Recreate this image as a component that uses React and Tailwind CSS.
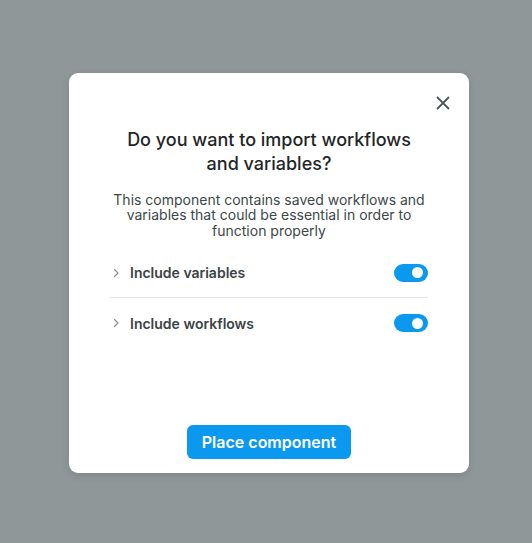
import React, { useState } from 'react';

function Toggle({ on, onChange }) {
  return (
    <button
      type="button"
      onClick={() => onChange(!on)}
      className={`relative w-[34px] h-[18px] rounded-full flex items-center px-[3px] ${on ? 'bg-[#0b99f0] justify-end' : 'bg-[#c9cfd1] justify-start'}`}
    >
      <span className="block w-[11px] h-[11px] rounded-full bg-white mr-[2px]" />
    </button>
  );
}

function OptionRow({ label, on, onChange, last }) {
  return (
    <div className={`flex items-center h-[50px] ${last ? '' : 'border-b border-[#e6e8e9]'}`}>
      <svg className="w-[10px] h-[10px] text-[#8a9294] ml-[1px] mr-[9px]" viewBox="0 0 10 10" fill="none">
        <path d="M3.5 1.5L7 5L3.5 8.5" stroke="currentColor" strokeWidth="1.2" strokeLinecap="round" strokeLinejoin="round" />
      </svg>
      <span className="flex-1 text-[14px] font-semibold text-[#3a4345]">{label}</span>
      <Toggle on={on} onChange={onChange} />
    </div>
  );
}

export default function App() {
  const [vars, setVars] = useState(true);
  const [flows, setFlows] = useState(true);

  return (
    <div className="w-[532px] h-[543px] bg-[#8f9798] flex items-center justify-center font-['Inter',sans-serif]">
      <div className="relative w-[400px] h-[400px] bg-white rounded-[9px] shadow-[0_2px_8px_rgba(0,0,0,0.12)] flex flex-col px-[41px] pt-[55px] pb-[14px] ml-[6px] mt-[2px]">
        {/* close button */}
        <button type="button" className="absolute top-[23px] right-[19px] w-[14px] h-[14px] text-[#4d5759]">
          <svg viewBox="0 0 14 14" fill="none" className="w-[14px] h-[14px]">
            <path d="M1.5 1.5L12.5 12.5M12.5 1.5L1.5 12.5" stroke="currentColor" strokeWidth="1.8" strokeLinecap="round" />
          </svg>
        </button>

        <h2 className="text-[18px] leading-[24px] font-medium text-[#1f2628] text-center px-[10px]">
          Do you want to import workflows and variables?
        </h2>
        <p className="mt-[16px] text-[14px] leading-[15.5px] text-[#3d4749] text-center">
          This component contains saved workflows and variables that could be essential in order to function properly
        </p>

        <div className="mt-[10px]">
          <OptionRow label="Include variables" on={vars} onChange={setVars} />
          <OptionRow label="Include workflows" on={flows} onChange={setFlows} last />
        </div>

        <div className="mt-auto flex justify-center">
          <button
            type="button"
            className="h-[34px] px-[15px] rounded-[6px] bg-[#0b99f0] text-white text-[16px] font-semibold"
          >
            Place component
          </button>
        </div>
      </div>
    </div>
  );
}
